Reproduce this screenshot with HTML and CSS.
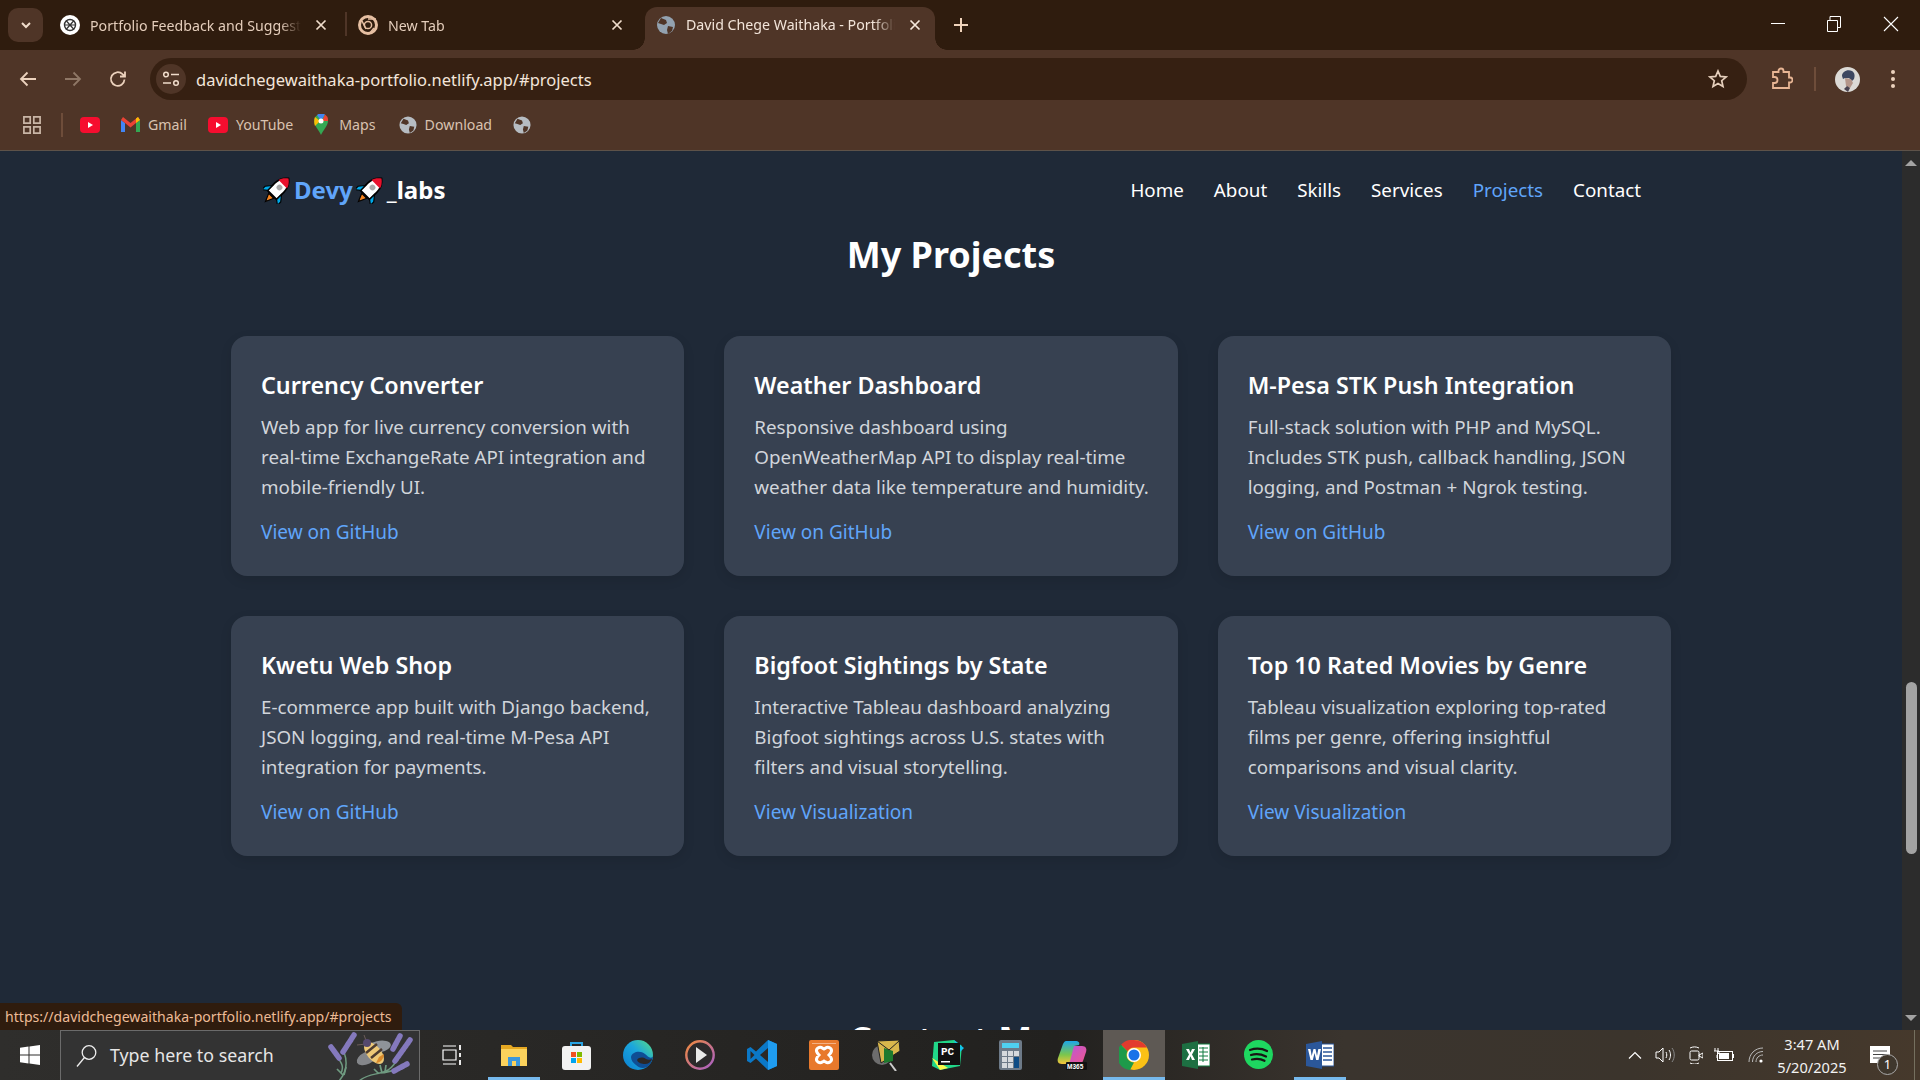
FILE: index.html
```html
<!DOCTYPE html>
<html>
	<head>
		<meta charset="UTF-8">
		<title>David Chege Waithaka - Portfolio</title>
		<link rel="stylesheet" href="styles.css">
	</head>
	<body>
		<div class="tabstrip">
			<div class="switcher"><svg width="14" height="14" viewBox="0 0 14 14"><path d="M3 5l4 4 4-4" fill="none" stroke="#f0dccb" stroke-width="2"/></svg></div>
			<div class="tab">
				<svg class="fav" viewBox="0 0 20 20"><circle cx="10" cy="10" r="10" fill="#fff"/><circle cx="10" cy="10" r="5.5" fill="none" stroke="#333" stroke-width="1.4"/><path d="M6 5.5l8 9M14 5.5l-8 9M4.5 10h11" stroke="#333" stroke-width="1.2"/></svg>
				<span class="tab-title">Portfolio Feedback and Suggestions</span>
				<svg class="tab-x" viewBox="0 0 12 12"><path d="M1.5 1.5l9 9M10.5 1.5l-9 9" stroke="#f0dccb" stroke-width="1.7"/></svg>
			</div>
			<div class="tab tab-sep">
				<svg class="fav" viewBox="0 0 20 20"><circle cx="10" cy="10" r="8.5" fill="none" stroke="#e6bfa2" stroke-width="3"/><circle cx="10" cy="10" r="3.6" fill="#2f1c0e" stroke="#e6bfa2" stroke-width="1.5"/><path d="M10 4h8M4 6l4 8M16 13l-5 6" stroke="#e6bfa2" stroke-width="1.5"/></svg>
				<span class="tab-title">New Tab</span>
				<svg class="tab-x" viewBox="0 0 12 12"><path d="M1.5 1.5l9 9M10.5 1.5l-9 9" stroke="#f0dccb" stroke-width="1.7"/></svg>
			</div>
			<div class="tab tab-active">
				<svg class="fav" viewBox="0 0 20 20"><circle cx="10" cy="10" r="9" fill="#93a2b0"/><path d="M5 3l5 2 1 3-3 2-3-1-3-1zM12 11l5 1-1 4-4 3-1-4z" fill="#4f3527"/></svg>
				<span class="tab-title">David Chege Waithaka - Portfolio</span>
				<svg class="tab-x" viewBox="0 0 12 12"><path d="M1.5 1.5l9 9M10.5 1.5l-9 9" stroke="#f5e8dc" stroke-width="1.7"/></svg>
			</div>
			<svg class="newtab" width="16" height="16" viewBox="0 0 16 16"><path d="M8 1v14M1 8h14" stroke="#f0d3bb" stroke-width="2"/></svg>
			<div class="win-btns">
				<svg width="14" height="14" viewBox="0 0 14 14"><path d="M0 6.5h14" stroke="#fff"/></svg>
				<svg width="14" height="16" viewBox="0 0 14 16"><path d="M.5 4.5h10v11H.5zM3 4.5V.5h10.5v11h-3" fill="none" stroke="#fff"/></svg>
				<svg width="16" height="16" viewBox="0 0 16 16"><path d="M1 1l14 14M15 1L1 15" stroke="#fff" stroke-width="1.1"/></svg>
			</div>
		</div>

		<div class="toolbar">
			<svg class="tool-btn" viewBox="0 0 20 20"><path d="M18 10H3M9.5 3.5L3 10l6.5 6.5" fill="none" stroke="#ecd2bd" stroke-width="1.8"/></svg>
			<svg class="tool-btn" viewBox="0 0 20 20"><path d="M2 10h15M10.5 3.5L17 10l-6.5 6.5" fill="none" stroke="#8f7766" stroke-width="1.8"/></svg>
			<svg class="tool-btn" viewBox="0 0 20 20"><path d="M16.5 10.5a6.8 6.8 0 1 1-2-5.3L17 7.500M17 2.500v5h-5" fill="none" stroke="#ecd2bd" stroke-width="1.8"/></svg>
			<div class="omnibox">
				<div class="site-info"><svg width="18" height="16" viewBox="0 0 18 16"><circle cx="4" cy="3.5" r="2.3" fill="none" stroke="#f0dccb" stroke-width="1.5"/><path d="M9 3.5h8M1 12h8" stroke="#f0dccb" stroke-width="1.6"/><circle cx="14" cy="12" r="2.3" fill="none" stroke="#f0dccb" stroke-width="1.5"/></svg></div>
				<span class="url">davidchegewaithaka-portfolio.netlify.app/#projects</span>
				<svg class="star" width="20" height="20" viewBox="0 0 20 20"><path d="M10 2l2.3 5.4 5.8.5-4.400 3.800 1.300 5.700-5-3-5 3 1.300-5.700L1.900 7.900l5.800-.5z" fill="none" stroke="#e6cfbc" stroke-width="1.7"/></svg>
			</div>
			<svg class="ext" width="22" height="24" viewBox="0 0 22 24"><path d="M2 5h5.500V4a2.500 2.500 0 0 1 5 0v1H18v5.500h1a2.500 2.500 0 0 1 0 5h-1V21H2v-5h1.500a3 3 0 0 0 0-6H2z" fill="none" stroke="#e8b594" stroke-width="1.8"/></svg>
			<div class="tool-sep"></div>
			<svg class="avatar" width="25" height="25" viewBox="0 0 25 25"><circle cx="12.500" cy="12.500" r="12.500" fill="#dcdad6"/><path d="M7 9c0-4 5-7 10-5 3 2 3 5 2 8l-2 2-3-3-4 0-2 1z" fill="#3d4760"/><path d="M10 11l6 1 2 4-3 5-4-2z" fill="#b4968a"/><path d="M9 22l3-3 3 2-2 4z" fill="#4a4350"/></svg>
			<svg class="dots" width="6" height="20" viewBox="0 0 6 20"><circle cx="3" cy="3" r="2" fill="#ecd2bd"/><circle cx="3" cy="10" r="2" fill="#ecd2bd"/><circle cx="3" cy="17" r="2" fill="#ecd2bd"/></svg>
		</div>

		<div class="bookmarks">
			<svg class="apps" width="18" height="18" viewBox="0 0 20 20"><path d="M1 1h7v7H1zM12 1h7v7h-7zM1 12h7v7H1zM12 12h7v7h-7z" fill="none" stroke="#c9b5a6" stroke-width="1.900"/></svg>
			<div class="tool-sep bm-sep"></div>
			<svg class="bm-yt" width="20" height="16" viewBox="0 0 20 16"><rect width="20" height="16" rx="4" fill="#f60d2f"/><path d="M8 5l5 3-5 3z" fill="#fff"/></svg>
			<div class="bm"><svg width="19" height="15" viewBox="0 0 19 15"><path d="M0 3v12h4V6z" fill="#4285f4"/><path d="M15 6v9h4V3z" fill="#34a853"/><path d="M0 3l4 3 5.500 4.500L15 6l4-3-2-3-7.500 6L2 0z" fill="#ea4335"/><path d="M15 6l4-3-2-3-2 1.600z" fill="#fbbc04"/></svg>Gmail</div>
			<div class="bm"><svg width="20" height="16" viewBox="0 0 20 16"><rect width="20" height="16" rx="4" fill="#f60d2f"/><path d="M8 5l5 3-5 3z" fill="#fff"/></svg>YouTube</div>
			<div class="bm bm-maps"><svg width="14" height="21" viewBox="0 0 14 21"><path d="M7 21C5 16 0 12 0 7a7 7 0 0 1 14 0c0 5-5 9-7 14z" fill="#34a853"/><path d="M1 3l5 4-5 5C0 10 0 5 1 3z" fill="#fbbc04"/><path d="M3 1a7 7 0 0 1 8-.5L7 7z" fill="#4285f4"/><path d="M11 .5A7 7 0 0 1 14 7L8 7z" fill="#ea4335"/><circle cx="7" cy="7" r="2.500" fill="#fff"/></svg>Maps</div>
			<div class="bm bm-down"><svg width="18" height="18" viewBox="0 0 20 20"><circle cx="10" cy="10" r="9.500" fill="#b6bcc2"/><path d="M5 3l5 2 1 3-3 2-3-1-3-1zM12 11l5 1-1 4-4 3-1-4z" fill="#4f3527"/></svg>Download</div>
			<svg width="18" height="18" viewBox="0 0 20 20"><circle cx="10" cy="10" r="9.500" fill="#b6bcc2"/><path d="M5 3l5 2 1 3-3 2-3-1-3-1zM12 11l5 1-1 4-4 3-1-4z" fill="#4f3527"/></svg>
		</div>

		<div class="page">
			<div class="content">
				<header class="site-head">
					<div class="logo">
						<svg width="28" height="28" viewBox="2 2 24 24"><g transform="rotate(45 14 14)"><path d="M14 0c4 3 5.500 7 5.500 11v9h-11v-9C8.500 7 10 3 14 0z" fill="#fff" stroke="#000" stroke-width="1.500"/><path d="M14 0c3 2.300 4.600 4.600 5.100 7H8.900C9.400 4.600 11 2.300 14 0z" fill="#e8112d"/><circle cx="14" cy="11" r="2.500" fill="#aaa"/><path d="M8.500 14l-4 5v4l4-3zM19.500 14l4 5v4l-4-3z" fill="#00a8e8" stroke="#000"/><path d="M11 21h6l-3 7z" fill="#f7841f" stroke="#000"/></g></svg>
						<span class="logo-blue">Devy</span>
						<svg width="28" height="28" viewBox="2 2 24 24"><g transform="rotate(45 14 14)"><path d="M14 0c4 3 5.500 7 5.500 11v9h-11v-9C8.500 7 10 3 14 0z" fill="#fff" stroke="#000" stroke-width="1.500"/><path d="M14 0c3 2.300 4.600 4.600 5.100 7H8.900C9.400 4.600 11 2.300 14 0z" fill="#e8112d"/><circle cx="14" cy="11" r="2.500" fill="#aaa"/><path d="M8.500 14l-4 5v4l4-3zM19.500 14l4 5v4l-4-3z" fill="#00a8e8" stroke="#000"/><path d="M11 21h6l-3 7z" fill="#f7841f" stroke="#000"/></g></svg>
						<span>_labs</span>
					</div>
					<nav class="site-nav">
						<a>Home</a>
						<a>About</a>
						<a>Skills</a>
						<a>Services</a>
						<a class="current">Projects</a>
						<a>Contact</a>
					</nav>
				</header>

				<section class="projects">
					<h2>My Projects</h2>
					<div class="grid">
						<div class="card">
							<h3>Currency Converter</h3>
							<p>Web app for live currency conversion with real-time ExchangeRate API integration and mobile-friendly UI.</p>
							<a>View on GitHub</a>
						</div>
						<div class="card">
							<h3>Weather Dashboard</h3>
							<p>Responsive dashboard using OpenWeatherMap API to display real-time weather data like temperature and humidity.</p>
							<a>View on GitHub</a>
						</div>
						<div class="card">
							<h3>M-Pesa STK Push Integration</h3>
							<p>Full-stack solution with PHP and MySQL. Includes STK push, callback handling, JSON logging, and Postman + Ngrok testing.</p>
							<a>View on GitHub</a>
						</div>
						<div class="card">
							<h3>Kwetu Web Shop</h3>
							<p>E-commerce app built with Django backend, JSON logging, and real-time M-Pesa API integration for payments.</p>
							<a>View on GitHub</a>
						</div>
						<div class="card">
							<h3>Bigfoot Sightings by State</h3>
							<p>Interactive Tableau dashboard analyzing Bigfoot sightings across U.S. states with filters and visual storytelling.</p>
							<a>View Visualization</a>
						</div>
						<div class="card">
							<h3>Top 10 Rated Movies by Genre</h3>
							<p>Tableau visualization exploring top-rated films per genre, offering insightful comparisons and visual clarity.</p>
							<a>View Visualization</a>
						</div>
					</div>
				</section>

				<h2 class="next-head">Contact Me</h2>
			</div>

			<div class="scrollbar">
				<div class="arrow-up"></div>
				<div class="thumb"></div>
				<div class="arrow-down"></div>
			</div>

			<div class="status">https://davidchegewaithaka-portfolio.netlify.app/#projects</div>
		</div>

		<div class="taskbar">
			<div class="start"><svg width="20" height="20" viewBox="0 0 20 20"><path d="M0 2.800l8.500-1.200v8H0zM9.500 1.400L20 0v9.600H9.500zM0 10.500h8.500v8L0 17.200zM9.500 10.500H20V20L9.500 18.600z" fill="#fff"/></svg></div>
			<div class="search">
				<svg width="21" height="24" viewBox="0 0 21 24"><circle cx="13" cy="8.500" r="6.800" fill="none" stroke="#eee" stroke-width="1.300"/><path d="M8.500 13.500L1 22.500" stroke="#eee" stroke-width="1.300"/></svg>
				<span>Type here to search</span>
				<svg class="bee" width="88" height="50" viewBox="0 0 88 50">
					<!-- stems -->
					<path d="M13 50C20 42 22 32 18 21M15 42C18 36 16 32 11 26M33 50C42 42 54 44 62 39 68 35 70 31 71 27M52 42C60 42 68 40 76 35" fill="none" stroke="#6f9a80" stroke-width="1.500"/>
					<path d="M11 38l6 6M20 36l-2 8M54 34l2 8M60 34l-1 7M48 38l4 4" fill="none" stroke="#6f9a80" stroke-width="1.700"/>
					<!-- lavender -->
					<path d="M17 21L28 4M5 16l8 11M69 30L84 9M67 18l7-13M68 40l13-7" fill="none" stroke="#8479bd" stroke-width="5.500" stroke-dasharray="3 1" stroke-linecap="round"/>
					<!-- bee -->
					<path d="M41 12l-3-8M40 13l-9 1" fill="none" stroke="#6b5c58" stroke-width="1"/>
					<ellipse cx="52" cy="16" rx="13" ry="6" fill="#8f9399" transform="rotate(-12 52 16)"/>
					<ellipse cx="41" cy="27" rx="11" ry="6" fill="#84868a" transform="rotate(-25 41 27)"/>
					<ellipse cx="48" cy="22" rx="7" ry="13" fill="#edc877" transform="rotate(-40 48 22)"/>
					<path d="M40 22l11-9M45 27l11-9" stroke="#4c3b30" stroke-width="2.500"/>
					<path d="M50 32c4 0 8-4 8-9l-5 3z" fill="#d98a2b"/>
					<circle cx="41" cy="12" r="4" fill="#55496e"/>
				</svg>
			</div>
			<div class="task-view"><svg width="20" height="20" viewBox="0 0 20 20"><path d="M1 1h13M1 19h13M1 5h13v10H1z" fill="none" stroke="#fff" stroke-width="1.200"/><path d="M18 0v5M18 8v4M18 15v5" stroke="#fff" stroke-width="1.800"/></svg></div>

			<div class="slot slot-open"><svg width="28" height="24" viewBox="0 0 28 24"><path d="M1 2h10l2 2h14v19H1z" fill="#e5a822"/><path d="M1 6h26v17H1z" fill="#fbd25c"/><path d="M8 23v-9h12v9h-4v-5h-4v5z" fill="#3b97dc"/></svg></div>
			<div class="slot"><svg width="29" height="30" viewBox="0 0 29 30"><path d="M9 7V3h11v4" fill="none" stroke="#29a3e2" stroke-width="2"/><rect y="6" width="29" height="24" rx="3" fill="#f2f2f2"/><path d="M9 12h5v5H9z" fill="#f25022"/><path d="M15 12h5v5h-5z" fill="#7fba00"/><path d="M9 18h5v5H9z" fill="#00a4ef"/><path d="M15 18h5v5h-5z" fill="#ffb900"/></svg></div>
			<div class="slot"><svg width="30" height="30" viewBox="0 0 30 30"><defs><linearGradient id="edgeg" x1="0" y1="1" x2="1" y2="0"><stop offset="0" stop-color="#0b7ed0"/><stop offset=".55" stop-color="#1ba6dc"/><stop offset="1" stop-color="#5ade84"/></linearGradient></defs><circle cx="15" cy="15" r="15" fill="url(#edgeg)"/><path d="M8 17c1-5 9-7 14-3 3 2 4 5 8 3-1 5-3 8-6 10-4 2-8 1-11-2-3-2-5-5-5-8z" fill="#0f4e94"/><path d="M14 20c2-3 6-3 9-1 2 1 4 1 6 0-1 3-4 5-7 5s-7-1-8-4z" fill="#2c2826"/></svg></div>
			<div class="slot"><svg width="30" height="30" viewBox="0 0 30 30"><circle cx="15" cy="15" r="13.700" fill="#2c2a2b" stroke="url(#playring)" stroke-width="2.400"/><defs><linearGradient id="playring" x1="0" y1="0" x2="1" y2="1"><stop offset="0" stop-color="#f08a3c"/><stop offset="1" stop-color="#a85fc9"/></linearGradient></defs><path d="M11 7l11 8-11 8z" fill="#e9e9e9"/></svg></div>
			<div class="slot"><svg width="30" height="30" viewBox="0 0 30 30"><path d="M21 0l9 4v22l-9 4L9 18.500 3.500 23 0 21v-12l3.500-2L9 11.500z" fill="#0b78c7"/><path d="M21 0l9 4v22l-9 4z" fill="#1f9cf0"/><path d="M21 8l-8 7 8 7z" fill="#2c2826"/><path d="M3.500 11v8l4-4z" fill="#2c2826"/></svg></div>
			<div class="slot"><svg width="30" height="30" viewBox="0 0 30 30"><rect width="30" height="30" rx="2" fill="#e8792c"/><path d="M3 3h24v1H3z" fill="#f4b184"/><path d="M9 8c3-2 4 0 6 1 2-1 3-3 6-1 3 2 1 5-1 7 2 2 4 5 1 7-3 2-4 0-6-1-2 1-3 3-6 1-3-2-1-5 1-7-2-2-4-5-1-7z" fill="none" stroke="#fff" stroke-width="3"/></svg></div>
			<div class="slot"><svg width="30" height="32" viewBox="0 0 30 32"><circle cx="11" cy="16" r="10" fill="#6d6d6d"/><path d="M6 2l22-1 1 11-19 12z" fill="#d8b64c" stroke="#222"/><path d="M13 9l9 3v10l-9 2z" fill="#1d7a2e"/><path d="M6 2l12 9L28 2" fill="none" stroke="#222"/><path d="M19 24l6 8" stroke="#ccc" stroke-width="2"/></svg></div>
			<div class="slot"><svg width="32" height="30" viewBox="0 0 32 30"><path d="M2 2l20-2 8 6-2 20-20 4-8-4z" fill="#21d789"/><path d="M22 0l10 8-6 6z" fill="#12c2e9"/><path d="M0 18l8 12 8-2z" fill="#fcf84a"/><rect x="6" y="3" width="22" height="22" fill="#111"/><path d="M9 21h9v1.500H9z" fill="#fff"/><text class="pc-mark" x="9" y="15">PC</text></svg></div>
			<div class="slot"><svg width="23" height="30" viewBox="0 0 23 30"><rect width="23" height="30" rx="2" fill="#6d7a88"/><rect x="3" y="3" width="17" height="5" fill="#4fd0f0"/><path d="M3 11h5v5H3zM9 11h5v5H9zM15 11h5v5h-5zM3 17h5v5H3zM9 17h5v5H9zM3 23h5v5H3zM9 23h5v5H9z" fill="#d5d9dd"/><path d="M15 17h5v11h-5z" fill="#0e4c85"/></svg></div>
			<div class="slot"><svg width="30" height="30" viewBox="0 0 30 30"><defs><linearGradient id="m365a" x1="0" y1="0" x2="0" y2="1"><stop offset="0" stop-color="#1da7e8"/><stop offset=".6" stop-color="#7cc64c"/><stop offset="1" stop-color="#f6c53a"/></linearGradient><linearGradient id="m365b" x1="0" y1="0" x2="1" y2="1"><stop offset="0" stop-color="#b857d8"/><stop offset="1" stop-color="#f2568c"/></linearGradient></defs><path d="M15 6h10c4 0 5 3 4 6l-3 9c-1 2-2 3-5 3H11z" fill="url(#m365b)"/><path d="M9 1h9c4 0 5 2 4 4l-5 1-4 15c-1 2-2 3-5 3H5C1 24 0 21 1 18L6 4c1-2 2-3 3-3z" fill="url(#m365a)"/><rect x="9" y="22" width="21" height="8" rx="1" fill="#111"/><text class="m-mark" x="10" y="28.500">M365</text></svg></div>
			<div class="slot slot-active"><svg width="30" height="30" viewBox="0 0 30 30"><circle cx="15" cy="15" r="15" fill="#fbc116"/><path d="M15 0a15 15 0 0 1 13 7.500H15a7.500 7.500 0 0 0-6.500 3.800L2 4.800A15 15 0 0 1 15 0z" fill="#e33b2e"/><path d="M2 4.800l6.500 6.500a7.500 7.500 0 0 0 6.500 11.200L11 30A15 15 0 0 1 2 4.800z" fill="#1e9a4a"/><circle cx="15" cy="15" r="7" fill="#fff"/><circle cx="15" cy="15" r="5.500" fill="#1a73e8"/></svg></div>
			<div class="slot"><svg width="28" height="28" viewBox="0 0 28 28"><path d="M12 3h16v22H12z" fill="#fff" stroke="#107c41"/><path d="M17 7h9M17 11h9M17 15h9M17 19h9M21 6v15" stroke="#107c41"/><path d="M0 3l16-3v28L0 25z" fill="#1d6f42"/><path d="M4 8l3 0 1.500 3.500L10 8h3l-3 5.500L13 19h-3l-1.500-3.700L7 19H4l3-5.500z" fill="#fff"/></svg></div>
			<div class="slot"><svg width="29" height="29" viewBox="0 0 29 29"><circle cx="14.500" cy="14.500" r="14.500" fill="#1ed760"/><path d="M6 10c6-2 12-1.500 17 1M7 15c5-1.500 10-1 15 1.500M8 19.500c4-1 9-.7 12.500 1.300" fill="none" stroke="#191414" stroke-width="2.200" stroke-linecap="round"/></svg></div>
			<div class="slot slot-open"><svg width="28" height="28" viewBox="0 0 28 28"><path d="M12 3h16v22H12z" fill="#fff" stroke="#2b579a"/><path d="M17 7h9M17 11h9M17 15h9M17 19h9" stroke="#2b579a" stroke-width="1.300"/><path d="M0 3l16-3v28L0 25z" fill="#2b579a"/><path d="M2 8h2.500l1.200 7L7.500 8h2l1.500 7 1.300-7H15l-2.500 11h-2.300L8.500 12l-1.700 7H4.500z" fill="#fff"/></svg></div>

			<div class="tray">
				<svg width="14" height="8" viewBox="0 0 14 8"><path d="M1 7.500L7 1.500l6 6" fill="none" stroke="#fff" stroke-width="1.200"/></svg>
				<svg width="20" height="16" viewBox="0 0 20 16"><path d="M1 5h3l4-4v14l-4-4H1z" fill="none" stroke="#fff"/><path d="M11 5c1 2 1 4 0 6M14 3c2 3 2 7 0 10" fill="none" stroke="#fff"/><path d="M17 1c3 4 3 10 0 14" fill="none" stroke="#888"/></svg>
				<svg width="14" height="18" viewBox="0 0 14 18"><rect x="1" y="5" width="9" height="9" rx="1.500" fill="none" stroke="#fff"/><path d="M10 9l4-2v5l-4-2zM1 2c3-1.500 6-1.500 9 0M1 17c3 1.500 6 1.500 9 0" fill="none" stroke="#fff"/></svg>
				<svg width="20" height="14" viewBox="0 0 20 14"><rect x="3.500" y="3.500" width="15" height="9" fill="none" stroke="#fff"/><rect x="5" y="5" width="10" height="6" fill="#fff"/><path d="M19.500 6v4" stroke="#fff"/><path d="M1 0v3M4 0v3M0 3h5v2l-2 2v3" fill="none" stroke="#fff"/></svg>
				<svg width="16" height="16" viewBox="0 0 16 16"><path d="M1 15c0-8 6-14 14-14M4.500 15c0-6 4.500-10.500 10.500-10.500M8 15c0-4 3-7 7-7" fill="none" stroke="#bbb"/><circle cx="13" cy="14" r="1.600" fill="#fff"/></svg>
			</div>
			<div class="clock"><span>3:47 AM</span><span>5/20/2025</span></div>
			<div class="notify">
				<svg width="20" height="18" viewBox="0 0 20 18"><path d="M0 0h20v17H0z" fill="#fff"/><path d="M3 5h14M3 8.500h14M3 12h9" stroke="#444" stroke-width="1"/></svg>
				<span class="badge">1</span>
			</div>
		</div>
	</body>
</html>
```

FILE: styles.css
```css
*{
	margin: 0;
	padding: 0;
	box-sizing: border-box;
}
html,body{
	height: 100%;
	overflow: hidden;
}
body{
	display: flex;
	flex-direction: column;
	font-family: "Noto Sans", "Open Sans", sans-serif;
	background: #1f2937;
}
svg{
	flex: none;
	display: block;
}

/* tab strip */
.tabstrip{
	height: 50px;
	flex: none;
	display: flex;
	align-items: flex-start;
	padding: 8px 0 0 8px;
	background: #2f1c0e;
}
.switcher{
	width: 35px;
	height: 34px;
	margin-right: 5px;
	border-radius: 10px;
	background: #4f3527;
	display: flex;
	align-items: center;
	justify-content: center;
}
.tab{
	width: 297px;
	height: 34px;
	display: flex;
	align-items: center;
	padding: 0 18px 0 12px;
	color: #e4cdbb;
	font-size: 14.2px;
}
.fav{
	width: 20px;
	height: 20px;
	margin-right: 10px;
}
.tab-title{
	flex: 1;
	overflow: hidden;
	white-space: nowrap;
	-webkit-mask-image: linear-gradient(to right, #000 90%, transparent);
	mask-image: linear-gradient(to right, #000 90%, transparent);
}
.tab-x{
	width: 12px;
	height: 12px;
	margin-left: 14px;
}
.tab-sep{
	width: 300px;
	position: relative;
	padding-left: 13px;
	padding-right: 22px;
}
.tab-sep::before{
	content: "";
	position: absolute;
	left: 0;
	top: 4px;
	width: 2px;
	height: 24px;
	background: #4f3527;
}
.tab-active{
	width: 290px;
	height: 43px;
	margin-top: -1px;
	padding: 0 14px 8px 11px;
	border-radius: 12px 12px 0 0;
	background: #4f3527;
	color: #f2e4d9;
	position: relative;
}
.tab-active::before,.tab-active::after{
	content: "";
	position: absolute;
	bottom: 0;
	width: 12px;
	height: 12px;
}
.tab-active::before{
	left: -12px;
	background: radial-gradient(circle at 0 0, #2f1c0e 11.5px, #4f3527 12px);
}
.tab-active::after{
	right: -12px;
	background: radial-gradient(circle at 100% 0, #2f1c0e 11.5px, #4f3527 12px);
}
.newtab{
	margin: 9px 0 0 18px;
}
.win-btns{
	margin-left: auto;
	display: flex;
	align-items: center;
	gap: 42px;
	padding: 8px 21px 0 0;
}

/* toolbar and bookmarks */
.toolbar{
	height: 50px;
	flex: none;
	display: flex;
	align-items: center;
	padding: 8px 0 0 18px;
	background: #4f3527;
}
.tool-btn{
	width: 20px;
	height: 20px;
	margin-right: 25px;
}
.tool-btn:nth-child(3){
	margin-right: 22px;
}
.omnibox{
	width: 1597px;
	height: 42px;
	display: flex;
	align-items: center;
	padding: 0 19px 0 6px;
	border-radius: 21px;
	background: #362012;
}
.site-info{
	width: 30px;
	height: 30px;
	margin-right: 10px;
	border-radius: 50%;
	background: #4f3527;
	display: flex;
	align-items: center;
	justify-content: center;
}
.url{
	flex: 1;
	color: #f3e5da;
	font-size: 16.5px;
}
.ext{
	margin-left: 24px;
}
.tool-sep{
	width: 2px;
	height: 24px;
	margin: 0 19px 0 21px;
	background: #6e4d3a;
}
.avatar{
	margin: 0 30px 0 0;
}
.bookmarks{
	height: 51px;
	flex: none;
	display: flex;
	align-items: center;
	gap: 21px;
	padding: 0 0 1px 23px;
	background: #4f3527;
	border-bottom: 1px solid #5d5249;
	color: #d9c2b0;
	font-size: 14.2px;
}
.bm{
	display: flex;
	align-items: center;
	gap: 8px;
}
.bm-sep{
	margin: 0 -4px 0 -1px;
}
.bm-maps{
	gap: 11px;
}
.bm-down{
	margin-left: 2px;
}

/* page */
.page{
	flex: 1;
	min-height: 0;
	display: flex;
	position: relative;
}
.content{
	flex: 1;
	min-width: 0;
	overflow: hidden;
	color: #fff;
}
.site-head{
	width: 1440px;
	height: 77px;
	margin: 0 auto;
	display: flex;
	align-items: center;
	justify-content: space-between;
	padding: 0 30px 0 32px;
}
.logo{
	display: flex;
	align-items: center;
	gap: 3px;
	font-size: 24px;
	font-weight: 700;
}
.logo-blue{
	color: #60a5fa;
}
.site-nav{
	display: flex;
	gap: 30px;
	font-size: 18.8px;
}
.site-nav .current{
	color: #60a5fa;
}
.projects{
	width: 1440px;
	margin: 0 auto;
}
.projects h2,.next-head{
	font-size: 36px;
	line-height: 54px;
	font-weight: 700;
	text-align: center;
}
.grid{
	display: grid;
	grid-template-columns: repeat(3, 1fr);
	gap: 40px;
	margin-top: 54px;
}
.card{
	height: 240px;
	padding: 29px 28px 0 30px;
	border-radius: 16px;
	background: #374151;
	box-shadow: 0 4px 12px rgba(0,0,0,0.1);
}
.card h3{
	font-size: 23.3px;
	line-height: 40px;
	font-weight: 600;
}
.card p{
	margin-top: 7px;
	font-size: 18.8px;
	line-height: 30px;
	color: #d1d5db;
}
.card a{
	display: block;
	margin-top: 15px;
	font-size: 19px;
	line-height: 30px;
	color: #60a5fa;
}
.next-head{
	margin-top: 157px;
}
.scrollbar{
	width: 18px;
	flex: none;
	display: flex;
	flex-direction: column;
	align-items: center;
	background: #2c2c2c;
}
.arrow-up,.arrow-down{
	width: 0;
	height: 0;
	border-left: 6.5px solid transparent;
	border-right: 6.5px solid transparent;
}
.arrow-up{
	margin-top: 9px;
	border-bottom: 6px solid #a3a3a3;
}
.arrow-down{
	margin-top: 161px;
	border-top: 6px solid #a3a3a3;
}
.thumb{
	width: 11px;
	height: 172px;
	margin-top: 516px;
	border-radius: 6px;
	background: #a3a3a3;
}
.status{
	position: absolute;
	left: 0;
	bottom: 0;
	height: 27px;
	padding: 0 10px 0 5px;
	border-radius: 0 6px 0 0;
	background: #2f1c0e;
	color: #edbb96;
	font-size: 14.1px;
	line-height: 27px;
}

/* taskbar */
.taskbar{
	height: 50px;
	flex: none;
	display: flex;
	align-items: stretch;
	background: linear-gradient(to right, #2f2e2c, #282725 30%, #22211f 55%, #3a342e 70%, #3b342c 85%, #46392c);
}
.start{
	width: 60px;
	display: flex;
	align-items: center;
	justify-content: center;
}
.search{
	width: 360px;
	display: flex;
	align-items: center;
	padding-left: 15px;
	border: 1px solid #6b6b6b;
	border-bottom: 0;
	background: #333;
	color: #e6e6e6;
	font-size: 17.8px;
	position: relative;
	overflow: hidden;
}
.search span{
	margin: 0 0 2px 13px;
}
.bee{
	position: absolute;
	right: 5px;
	top: 0;
}
.task-view{
	width: 63px;
	display: flex;
	align-items: center;
	justify-content: center;
}
.slot{
	width: 62px;
	display: flex;
	align-items: center;
	justify-content: center;
	padding-bottom: 1px;
	position: relative;
}
.slot-open::after{
	content: "";
	position: absolute;
	left: 5px;
	right: 5px;
	bottom: 0;
	height: 3px;
	background: #76b9ed;
}
.slot-active{
	background: #5e5954;
	border-bottom: 3px solid #76b9ed;
	padding-top: 2px;
	padding-bottom: 0;
}
.pc-mark{
	font: 700 11px "Liberation Mono", monospace;
	fill: #fff;
}
.m-mark{
	font: 700 6.5px "Liberation Sans", sans-serif;
	fill: #fff;
}
.tray{
	margin-left: auto;
	display: flex;
	align-items: center;
	gap: 14px;
}
.tray svg:first-child{
	margin-right: -1px;
}
.tray svg:nth-child(3){
	margin-right: -3px;
}
.clock{
	width: 88px;
	margin-left: 4px;
	display: flex;
	flex-direction: column;
	align-items: center;
	justify-content: center;
	gap: 3px;
	color: #f2f2f2;
	font-size: 14.6px;
	line-height: 20px;
}
.notify{
	width: 59px;
	margin-right: 5px;
	position: relative;
	display: flex;
	align-items: center;
	padding-left: 14px;
	border-right: 1px solid #75705f;
}
.badge{
	position: absolute;
	left: 21px;
	top: 24px;
	width: 21px;
	height: 21px;
	border: 1px solid #aaa;
	border-radius: 50%;
	background: #3f372d;
	color: #fff;
	font-size: 13px;
	line-height: 19px;
	text-align: center;
}
```
